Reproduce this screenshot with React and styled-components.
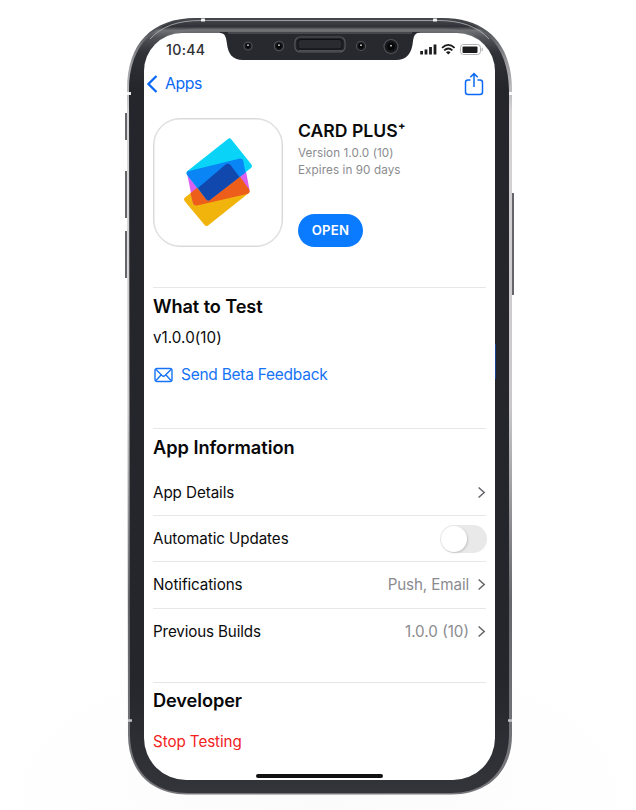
import React from "react";
import styled, { createGlobalStyle } from "styled-components";

const Global = createGlobalStyle`
  * { box-sizing: border-box; }
  body { margin: 0; background: #fff; font-family: Inter, "Liberation Sans", sans-serif; color: #080809; }
`;

const Page = styled.main`
  width: 636px;
  height: 810px;
  padding: 24px 0 0 127px;
  overflow: hidden;
  background: radial-gradient(ellipse 330px 150px at 320px 790px, #fbfbfc, #fff);
`;

const Phone = styled.div`
  position: relative;
  width: 385px;
  height: 771px;
  padding: 9px 17px 14px;
`;

const Artwork = styled.svg`
  position: absolute;
  left: -7px;
  top: -10px;
  overflow: visible;
  pointer-events: none;
`;

const Screen = styled.div`
  position: relative;
  display: flex;
  flex-direction: column;
  width: 351px;
  height: 747px;
  background: #fff;
  border-radius: 38px 38px 42px 42px;
  overflow: hidden;
`;

const StatusBar = styled.header`
  display: flex;
  align-items: center;
  justify-content: space-between;
  height: 34px;
  padding: 0 11px 0 22px;
`;

const Label = styled.span`
  font-size: ${(p) => p.$size}px;
  font-weight: ${(p) => p.$weight || 400};
  letter-spacing: ${(p) => p.$track || 0}px;
  color: ${(p) => p.$color || "#0b0b0c"};
  line-height: ${(p) => p.$line || 20}px;
  white-space: nowrap;
`;

const NavBar = styled.nav`
  display: flex;
  align-items: center;
  justify-content: space-between;
  height: 33px;
  margin-bottom: 1px;
  padding: 0 11px 0 3px;
`;

const BackLink = styled.a`
  display: flex;
  align-items: center;
  gap: 7px;
`;

const Content = styled.div`
  display: flex;
  flex-direction: column;
  width: 333px;
  margin-left: 9px;
`;

const AppHeader = styled.section`
  display: flex;
  gap: 15px;
  height: 187px;
  padding-top: 17px;
  border-bottom: 1px solid #e7e7e8;
`;

const AppIcon = styled.div`
  width: 130px;
  height: 129px;
  border: 1px solid #d9d9db;
  border-radius: 27px;
  box-shadow: inset 0 0 0 0.5px #dededf;
`;

const AppMeta = styled.div`
  display: flex;
  flex-direction: column;
  align-items: flex-start;
`;

const OpenButton = styled.button`
  width: 65px;
  height: 33px;
  margin-top: 35px;
  padding: 0;
  border: 0;
  border-radius: 17px;
  background: #0a7aff;
  color: #fff;
  font: 600 13.2px/33px Inter, sans-serif;
  letter-spacing: 0.25px;
`;

const TestSection = styled.section`
  display: flex;
  flex-direction: column;
  height: 141px;
  padding-top: 7px;
  border-bottom: 1px solid #e7e7e8;
`;

const FeedbackLink = styled.a`
  display: flex;
  align-items: center;
  gap: 8px;
  margin-top: 6px;
  padding-left: 1px;
`;

const SectionTitle = styled.h2`
  margin: 0;
  font-size: 18.2px;
  font-weight: 600;
  line-height: 22px;
  letter-spacing: ${(p) => p.$track || 0}px;
`;

const InfoHeader = styled.div`
  height: 41px;
  padding-top: 7px;
`;

const Row = styled.div`
  display: flex;
  align-items: center;
  justify-content: space-between;
  height: ${(p) => p.$height}px;
  border-bottom: ${(p) => (p.$last ? 0 : 1)}px solid #e7e7e8;
`;

const RowEnd = styled.div`
  display: flex;
  align-items: center;
  gap: 8px;
`;

const Switch = styled.div`
  display: flex;
  width: 47px;
  height: 28px;
  margin-right: -1px;
  padding: 1px;
  border-radius: 14px;
  background: #e9e9ea;
`;

const Knob = styled.div`
  width: 26px;
  height: 26px;
  border-radius: 50%;
  background: #fff;
  box-shadow: 1px 1px 2px rgba(0, 0, 0, 0.16);
`;

const Developer = styled.section`
  display: flex;
  flex-direction: column;
  gap: 21px;
  margin-top: 28px;
  padding-top: 6px;
  border-top: 1px solid #e7e7e8;
`;

const HomeBar = styled.div`
  position: absolute;
  left: 112px;
  bottom: 2px;
  width: 127px;
  height: 4px;
  border-radius: 2px;
  background: #111114;
`;

const Chevron = () => (
  <svg width="9" height="14" viewBox="0 0 9 14" fill="none">
    <path d="M1.6 1.5 L7.2 6.5 L1.6 11.5" stroke="#65656a" strokeWidth="1.5" />
  </svg>
);

const Lens = ({ x, y, r }) => (
  <g>
    <circle cx={x} cy={y} r={r} fill="#17181b" stroke="#50535a" strokeWidth="1.1" />
    <circle cx={x} cy={y} r={r * 0.55} fill="#060709" />
    <circle cx={x} cy={y - 0.8} r={0.9} fill="#d7d9dd" />
  </g>
);

/* Body of the handset; coordinates run from 120,14 on the page. */
const Body = () => (
  <Artwork width="400" height="786" viewBox="120 14 400 786">
    <defs>
      <linearGradient id="rim" x1="0" y1="18" x2="0" y2="795" gradientUnits="userSpaceOnUse">
        <stop offset="0" stopColor="#3c3e43" />
        <stop offset="0.06" stopColor="#9b9ba0" />
        <stop offset="0.12" stopColor="#d5d3d4" />
        <stop offset="0.5" stopColor="#c9c7c9" />
        <stop offset="0.75" stopColor="#66676c" />
        <stop offset="1" stopColor="#77777c" />
      </linearGradient>
      <linearGradient id="bezel" x1="0" y1="18" x2="0" y2="795" gradientUnits="userSpaceOnUse">
        <stop offset="0" stopColor="#4a4c51" />
        <stop offset="0.011" stopColor="#303238" />
        <stop offset="0.016" stopColor="#707276" />
        <stop offset="0.025" stopColor="#505257" />
        <stop offset="0.045" stopColor="#303238" />
        <stop offset="0.09" stopColor="#24262c" />
        <stop offset="0.85" stopColor="#25262b" />
        <stop offset="1" stopColor="#34353b" />
      </linearGradient>
    </defs>
    <path d="M126 113v27M126 171v47M126 231v47" stroke="#3e4045" strokeWidth="1.6" />
    <path d="M513 193v102" stroke="#66666a" strokeWidth="2" />
    <path d="M196 18H442C486 18 512 43 512 90V735C512 771 488 794.500 452 794.500H187C151 794.500 128 771 128 735L127 90C127 43 152 18 196 18Z" fill="url(#rim)" />
    <path d="M197 18.500H441C482 18.500 508.500 45 509 90V734C509 770 487 793 451 793H188C152 793 130 770 130 734L129 90C129 45 156 18.500 197 18.500Z" fill="url(#bezel)" />
    <path d="M150 39C162 26 178 20.500 201 20.500H438C460 20.500 477 26 489 39" fill="none" stroke="#b4b5b8" strokeWidth="0.8" />
    <path d="M158 44C169 33 179 30 199 29.500H440C461 30 471 33 481 42" fill="none" stroke="#75767a" strokeWidth="2" opacity=".55" />
    <path d="M201 20h4M433 20h4" stroke="#fff" strokeWidth="3" opacity=".9" />
    <path d="M127 93.500h4M509 93.500h3" stroke="#fff" strokeWidth="3" opacity=".9" />
    <path d="M128 720.500h4M508 720.500h4" stroke="#c4c4c8" strokeWidth="2.500" />
  </Artwork>
);

/* Notch, earpiece and lenses above the screen's content. */
const Notch = () => (
  <Artwork width="400" height="60" viewBox="120 14 400 60">
    <path d="M220 32H421C415 33 414 35 413 41C412 53 407 60 396 60H243C232 60 228 53 227 44C226 36 225 33.500 220 33Z" fill="#27292f" />
    <path d="M228 33H412" stroke="#45474d" strokeWidth="2" />
    <rect x="295" y="37" width="50" height="15" rx="5" fill="#212329" stroke="#56585e" strokeWidth="1.2" />
    <rect x="298" y="39.500" width="44" height="9.500" rx="3" fill="#292b31" stroke="#101115" />
    <path d="M299 50.800H342" stroke="#7a7c81" strokeWidth=".7" />
    <Lens x={248} y={46} r={4} />
    <Lens x={279} y={46} r={4.700} />
    <Lens x={361} y={46} r={4.500} />
    <Lens x={391} y={46.500} r={7} />
    <path d="M495.500 344v35" stroke="#1c3f91" strokeWidth="1" />
  </Artwork>
);

const BLUE = "#0b69f5";

export default function App() {
  return (
    <>
      <Global />
      <Page>
        <Phone>
          <Body />
          <Screen>
            <StatusBar>
              <Label $size={14.2} $track={0.3} $weight={450} $color="#303033">10:44</Label>
              <svg width="66" height="14" viewBox="0 0 66 14">
                <path d="M3.600 8v3.500M8 6.500v5M12.500 4v7.500M17 1.500v10" stroke="#1c1c1f" strokeWidth="2.800" />
                <g fill="none" stroke="#1c1c1f" strokeWidth="1.800">
                  <path d="M24 4.800Q30.300 -1 36.600 4.800" />
                  <path d="M26.200 7.400Q30.300 3.700 34.400 7.400" />
                </g>
                <path d="M28 9.200Q30.300 7.400 32.600 9.200L30.300 11.500Z" fill="#1c1c1f" />
                <rect x="42.500" y="1.500" width="20" height="10" rx="3" fill="#fff" stroke="#b1b1b4" />
                <rect x="44.500" y="3.500" width="15" height="6.500" rx="1" fill="#1c1c1f" />
                <path d="M64.200 4.800v3.400" stroke="#bbb" strokeWidth="1.300" />
              </svg>
            </StatusBar>
            <NavBar>
              <BackLink>
                <svg width="11" height="18" viewBox="0 0 11 18" fill="none">
                  <path d="M9.500 1L1.500 9L9.500 17" stroke={BLUE} strokeWidth="2.300" />
                </svg>
                <Label $size={15.8} $track={-0.4} $color={BLUE}>Apps</Label>
              </BackLink>
              <svg width="20" height="24" viewBox="0 0 20 24" fill="none" stroke={BLUE} strokeWidth="1.500">
                <path d="M6.500 8H4Q1.500 8 1.500 10.500V20Q1.500 22.500 4 22.500H16Q18.500 22.500 18.500 20V10.500Q18.500 8 16 8H13.500M10 15V2M6.300 5.300L10 1.600L13.700 5.300" />
              </svg>
            </NavBar>
            <Content>
              <AppHeader>
                <AppIcon>
                  <svg width="128" height="127" viewBox="154 119 128 127">
                    <g strokeLinejoin="round" strokeWidth="5">
                      <path d="M186.500 199.500L226 169L246 192L206.500 223.500Z" fill="#f0b40c" stroke="#f0b40c" />
                      <path d="M189.500 173L241.500 161L247 190L195.500 202.500Z" fill="#db60f0" stroke="#db60f0" />
                      <path d="M189 173L229.500 141L249.500 166L208 198Z" fill="#09d4f8" stroke="#09d4f8" />
                    </g>
                    <path d="M190.500 193L224 167L228 164.500L230 165L240 176.500L249.500 190Q250.500 193 247 194L197 205.500Q194 206 193 203Z" fill="#ed5e1b" />
                    <path d="M187 171.500L240 158.500Q243 158.500 243.300 161L245.500 172.500L209.500 200Q207.500 201.500 206 199L186.500 174Z" fill="#0985f5" />
                    <path d="M198 188L225 165Q228 162.500 230.500 165L239.500 177L210.500 199.500Q208 201.500 206 199Z" fill="#1148ae" />
                  </svg>
                </AppIcon>
                <AppMeta>
                  <Label $size={17.6} $weight={600} $track={0} $line={26}>CARD PLUS⁺</Label>
                  <Label $size={11.7} $track={0.08} $line={18}  $color="#8b8b8f">Version 1.0.0 (10)</Label>
                  <Label $size={11.7} $track={0.08} $line={17} $color="#8b8b8f">Expires in 90 days</Label>
                  <OpenButton>OPEN</OpenButton>
                </AppMeta>
              </AppHeader>
              <TestSection>
                <SectionTitle $track={-0.1}>What to Test</SectionTitle>
                <Label $size={15.2} $track={0.05} $line={42}>v1.0.0(10)</Label>
                <FeedbackLink>
                  <svg width="19" height="16" viewBox="0 0 19 16" fill="none" stroke="#1673f6" strokeWidth="1.400">
                    <rect x="1" y="1.500" width="17" height="13" rx="2" />
                    <path d="M2 2.500L8 8.500Q9.500 9.800 11 8.500L17 2.500M2 13.500L7 8M17 13.500L12 8" />
                  </svg>
                  <Label $size={15.5} $track={-0.26} $color="#1673f6">Send Beta Feedback</Label>
                </FeedbackLink>
              </TestSection>
              <InfoHeader><SectionTitle $track={-0.03}>App Information</SectionTitle></InfoHeader>
              <Row $height={46}>
                <Label $size={15.2} $track={-0.08}>App Details</Label>
                <Chevron />
              </Row>
              <Row $height={46}>
                <Label $size={15.2} $track={-0.08}>Automatic Updates</Label>
                <Switch><Knob /></Switch>
              </Row>
              <Row $height={47}>
                <Label $size={15.2} $track={-0.08}>Notifications</Label>
                <RowEnd><Label $size={15.2} $track={-0.12} $color="#8b8b8f">Push, Email</Label><Chevron /></RowEnd>
              </Row>
              <Row $height={45} $last>
                <Label $size={15.2} $track={-0.14}>Previous Builds</Label>
                <RowEnd><Label $size={15.2} $color="#8b8b8f">1.0.0 (10)</Label><Chevron /></RowEnd>
              </Row>
              <Developer>
                <SectionTitle $track={-0.1}>Developer</SectionTitle>
                <Label $size={15.2} $track={-0.08} $color="#f3221e">Stop Testing</Label>
              </Developer>
            </Content>
            <HomeBar />
          </Screen>
          <Notch />
        </Phone>
      </Page>
    </>
  );
}
